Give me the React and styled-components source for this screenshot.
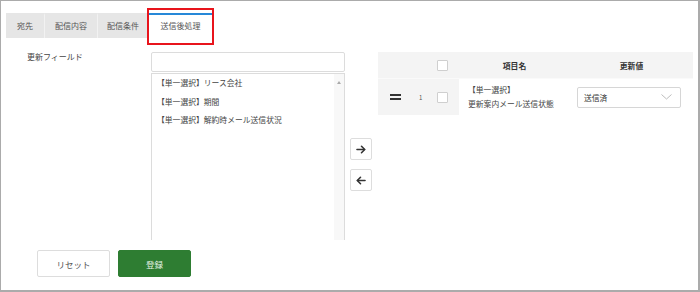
import styled, { createGlobalStyle } from 'styled-components';

const GlobalStyle = createGlobalStyle`
  html, body {
    margin: 0;
    padding: 0;
    background: #ffffff;
  }
  body {
    font-family: "Noto Sans CJK JP", "Noto Sans", sans-serif;
    color: #333;
  }
`;

const Frame = styled.div`
  position: relative;
  width: 700px;
  height: 292px;
  box-sizing: border-box;
  border-style: solid;
  border-color: #ababab;
  border-width: 1px 2px 2px 1px;
  padding-top: 12px;
  overflow: hidden;
`;

const TabBar = styled.div`
  display: flex;
  width: fit-content;
  margin-left: 5px;
  background: #e6e6e6;
  height: 25px;
`;

const Tab = styled.div`
  display: flex;
  align-items: center;
  justify-content: center;
  width: ${(p) => p.$w}px;
  box-sizing: border-box;
  font-size: 8px;
  color: #555;
  border-left: ${(p) => (p.$first ? 'none' : '1px solid #f2f2f2')};
  background: ${(p) => (p.$active ? '#ffffff' : 'transparent')};
  border-top: 2px solid ${(p) => (p.$active ? '#2688d8' : 'transparent')};
  padding-bottom: 2px;
`;

const Highlight = styled.div`
  position: absolute;
  left: 146px;
  top: 7px;
  width: 67px;
  height: 37px;
  box-sizing: border-box;
  border: 2px solid #e8141c;
`;

const Body = styled.div`
  display: flex;
  margin-top: 14px;
  padding-left: 26px;
  height: 188px;
`;

const FieldLabel = styled.div`
  width: 124px;
  font-size: 8px;
  color: #444;
  line-height: 10px;
  padding-top: 0;
`;

const FieldColumn = styled.div`
  display: flex;
  flex-direction: column;
  width: 194px;
`;

const SearchInput = styled.div`
  height: 20px;
  box-sizing: border-box;
  border: 1px solid #dcdcdc;
  border-radius: 2px;
`;

const ListBox = styled.div`
  position: relative;
  flex: 1;
  margin-top: 1px;
  border: 1px solid #dcdcdc;
  border-bottom: none;
  display: flex;
`;

const ListItems = styled.div`
  flex: 1;
  padding: 0 0 0 5px;
`;

const ListItem = styled.div`
  font-size: 7.8px;
  color: #444;
  height: 18.5px;
  line-height: 18.5px;
  white-space: nowrap;
`;

const ScrollTrack = styled.div`
  width: 10px;
  background: #f8f8f8;
  display: flex;
  justify-content: center;
  padding-top: 7px;
`;

const ScrollUp = styled.div`
  width: 0;
  height: 0;
  border-left: 2.5px solid transparent;
  border-right: 2.5px solid transparent;
  border-bottom: 3px solid #aaa;
`;

const ArrowColumn = styled.div`
  display: flex;
  flex-direction: column;
  gap: 9px;
  margin-left: 5px;
  padding-top: 86px;
`;

const ArrowButton = styled.div`
  width: 22px;
  height: 22px;
  box-sizing: border-box;
  border: 1px solid #dddddd;
  border-radius: 2px;
  display: flex;
  align-items: center;
  justify-content: center;
  background: #fff;
`;

const Table = styled.div`
  margin-left: 6px;
  width: 315px;
  align-self: flex-start;
`;

const Row = styled.div`
  display: grid;
  grid-template-columns: 34px 18px 29px 111px 123px;
  height: ${(p) => p.$h}px;
  background: ${(p) => (p.$head ? '#f4f4f4' : 'transparent')};
  border-bottom: ${(p) => (p.$head ? '1px solid #fafafa' : 'none')};
`;

const Cell = styled.div`
  display: flex;
  align-items: center;
  justify-content: ${(p) => p.$justify || 'flex-start'};
  background: ${(p) => (p.$shade ? '#f4f4f4' : 'transparent')};
  padding-left: ${(p) => p.$pl || 0}px;
  box-sizing: border-box;
`;

const HeadText = styled.div`
  font-size: 7.8px;
  font-weight: bold;
  color: #333;
  width: 100%;
  text-align: center;
`;

const Checkbox = styled.div`
  width: 11px;
  height: 11px;
  box-sizing: border-box;
  border: 1px solid #cfcfcf;
  border-radius: 1px;
  background: #fff;
`;

const Handle = styled.div`
  display: flex;
  flex-direction: column;
  gap: 2px;
  & > span {
    display: block;
    width: 11px;
    height: 2px;
    background: #333;
  }
`;

const RowNumber = styled.div`
  font-size: 6px;
  color: #555;
`;

const ItemName = styled.div`
  font-size: 7.8px;
  color: #444;
  line-height: 14px;
  white-space: nowrap;
`;

const Select = styled.div`
  width: 104px;
  height: 21px;
  box-sizing: border-box;
  border: 1px solid #d6d6d6;
  border-radius: 2px;
  display: flex;
  align-items: center;
  justify-content: space-between;
  padding: 0 8px 0 6px;
  font-size: 7.8px;
  color: #333;
  background: #fff;
`;

const Footer = styled.div`
  display: flex;
  gap: 8px;
  margin-top: 10px;
  padding-left: 36px;
`;

const Button = styled.div`
  width: 73px;
  height: 27px;
  box-sizing: border-box;
  display: flex;
  align-items: center;
  justify-content: center;
  border-radius: 2px;
  font-size: 8.5px;
  border: 1px solid ${(p) => (p.$primary ? '#2e7d32' : '#dddddd')};
  background: ${(p) => (p.$primary ? '#2e7d32' : '#ffffff')};
  color: ${(p) => (p.$primary ? '#e6f2e6' : '#555')};
`;

const Arrow = ({ dir }) => (
  <svg width="10" height="9" viewBox="0 0 10 9">
    <g
      fill="none"
      stroke="#333"
      strokeWidth="1.6"
      strokeLinecap="round"
      strokeLinejoin="round"
      transform={dir === 'left' ? 'translate(10,0) scale(-1,1)' : undefined}
    >
      <path d="M1 4.5 H8.5" />
      <path d="M5.5 1.3 L8.7 4.5 L5.5 7.7" />
    </g>
  </svg>
);

const Chevron = () => (
  <svg width="11" height="6" viewBox="0 0 11 6">
    <path d="M0.5 0.5 L5.5 5 L10.5 0.5" fill="none" stroke="#bdbdbd" strokeWidth="1" />
  </svg>
);

const tabs = [
  { label: '宛先', w: 38 },
  { label: '配信内容', w: 53 },
  { label: '配信条件', w: 51 },
  { label: '送信後処理', w: 64, active: true },
];

const fields = [
  '【単一選択】リース会社',
  '【単一選択】期間',
  '【単一選択】解約時メール送信状況',
];

export default function App() {
  return (
    <>
      <GlobalStyle />
      <Frame>
        <TabBar>
          {tabs.map((t, i) => (
            <Tab key={t.label} $w={t.w} $active={t.active} $first={i === 0}>
              {t.label}
            </Tab>
          ))}
        </TabBar>
        <Highlight />

        <Body>
          <FieldLabel>更新フィールド</FieldLabel>
          <FieldColumn>
            <SearchInput />
            <ListBox>
              <ListItems>
                {fields.map((f) => (
                  <ListItem key={f}>{f}</ListItem>
                ))}
              </ListItems>
              <ScrollTrack>
                <ScrollUp />
              </ScrollTrack>
            </ListBox>
          </FieldColumn>

          <ArrowColumn>
            <ArrowButton>
              <Arrow dir="right" />
            </ArrowButton>
            <ArrowButton>
              <Arrow dir="left" />
            </ArrowButton>
          </ArrowColumn>

          <Table>
            <Row $head $h={26}>
              <Cell />
              <Cell />
              <Cell $pl={7}>
                <Checkbox />
              </Cell>
              <Cell>
                <HeadText>項目名</HeadText>
              </Cell>
              <Cell>
                <HeadText>更新値</HeadText>
              </Cell>
            </Row>
            <Row $h={36}>
              <Cell $shade $pl={12}>
                <Handle>
                  <span />
                  <span />
                </Handle>
              </Cell>
              <Cell $shade $pl={7}>
                <RowNumber>1</RowNumber>
              </Cell>
              <Cell $shade $pl={7}>
                <Checkbox />
              </Cell>
              <Cell $pl={9}>
                <ItemName>
                  【単一選択】
                  <br />
                  更新案内メール送信状態
                </ItemName>
              </Cell>
              <Cell $pl={7}>
                <Select>
                  <span>送信済</span>
                  <Chevron />
                </Select>
              </Cell>
            </Row>
          </Table>
        </Body>

        <Footer>
          <Button>リセット</Button>
          <Button $primary>登録</Button>
        </Footer>
      </Frame>
    </>
  );
}
